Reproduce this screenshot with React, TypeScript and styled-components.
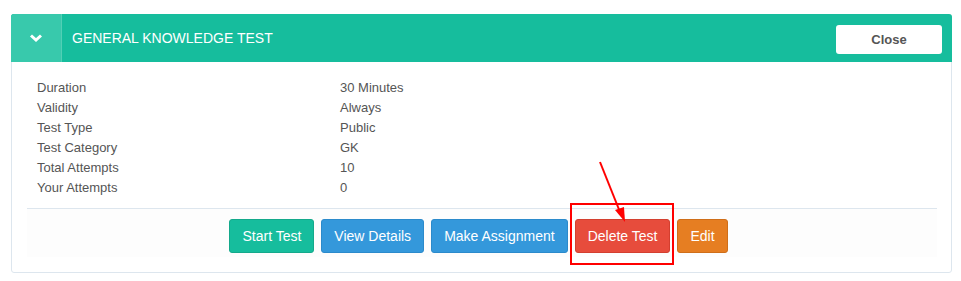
import React from 'react';
import styled, { createGlobalStyle } from 'styled-components';

const GlobalStyle = createGlobalStyle`
  body {
    margin: 0;
    background: #ffffff;
    font-family: "Liberation Sans", Arial, sans-serif;
  }
`;

const Page = styled.div`
  position: relative;
  padding: 14px 9px 0 11px;
`;

const Panel = styled.div`
  border: 1px solid #dde6ee;
  border-radius: 3px;
  background: #ffffff;
  padding-bottom: 15px;
`;

const Header = styled.div`
  display: flex;
  align-items: center;
  height: 48px;
  margin: -1px -1px 0 -1px;
  background: #16bd9d;
  border-radius: 3px 3px 0 0;
`;

const Toggle = styled.div`
  width: 50px;
  height: 48px;
  display: flex;
  align-items: center;
  justify-content: center;
  background: #38c9ac;
  border-right: 1px solid #52cfb5;
  border-top-left-radius: 3px;
`;

const Title = styled.div`
  flex: 1;
  padding-left: 10px;
  color: #ffffff;
  font-size: 14px;
  text-transform: uppercase;
`;

const CloseButton = styled.button`
  width: 106px;
  height: 29px;
  margin: 2px 10px 0 0;
  border: none;
  border-radius: 3px;
  background: #ffffff;
  color: #555555;
  font-family: inherit;
  font-size: 13px;
  font-weight: bold;
  cursor: pointer;
`;

const Body = styled.div`
  padding: 16px 14px 0 15px;
`;

const InfoGrid = styled.div`
  display: grid;
  grid-template-columns: 303px 1fr;
  padding: 0 10px 10px 10px;
  border-bottom: 1px solid #dde6ee;
  color: #555555;
  font-size: 13px;
  line-height: 20px;
`;

const Footer = styled.div`
  display: flex;
  justify-content: center;
  padding: 10px 14px 4px 0;
  background: #fdfdfd;
`;

const ActionButton = styled.button<{ $bg: string; $border: string }>`
  height: 34px;
  padding: 0 12px;
  margin-left: 7px;
  border: 1px solid ${p => p.$border};
  border-radius: 3px;
  background: ${p => p.$bg};
  color: #ffffff;
  font-family: inherit;
  font-size: 14px;
  cursor: pointer;
`;

const Annotation = styled.svg`
  position: absolute;
  left: 0;
  top: 0;
  pointer-events: none;
`;

const rows: [string, string][] = [
  ['Duration', '30 Minutes'],
  ['Validity', 'Always'],
  ['Test Type', 'Public'],
  ['Test Category', 'GK'],
  ['Total Attempts', '10'],
  ['Your Attempts', '0'],
];

const actions = [
  { label: 'Start Test', bg: '#16bd9d', border: '#14a98b' },
  { label: 'View Details', bg: '#3498db', border: '#2b8acb' },
  { label: 'Make Assignment', bg: '#3498db', border: '#2b8acb' },
  { label: 'Delete Test', bg: '#e74c3c', border: '#d33f2f' },
  { label: 'Edit', bg: '#e67e22', border: '#cf6e19' },
];

const App: React.FC = () => {
  return (
    <Page>
      <GlobalStyle />
      <Panel>
        <Header>
          <Toggle>
            <svg width="14" height="10" viewBox="0 0 14 10">
              <path d="M2 2.5 L7 7 L12 2.5" stroke="#fff" strokeWidth="3" fill="none" />
            </svg>
          </Toggle>
          <Title>General Knowledge Test</Title>
          <CloseButton>Close</CloseButton>
        </Header>
        <Body>
          <InfoGrid>
            {rows.map(([label, value]) => (
              <React.Fragment key={label}>
                <div>{label}</div>
                <div>{value}</div>
              </React.Fragment>
            ))}
          </InfoGrid>
          <Footer>
            {actions.map(a => (
              <ActionButton key={a.label} $bg={a.bg} $border={a.border}>
                {a.label}
              </ActionButton>
            ))}
          </Footer>
        </Body>
      </Panel>
      <Annotation width="961" height="281">
        <rect x="571" y="204" width="102" height="60" fill="none" stroke="#ff0000" strokeWidth="2" />
        <line x1="600" y1="162" x2="620" y2="212" stroke="#ff0000" strokeWidth="2" />
        <polygon points="625,222 615,210 624,207" fill="#ff0000" />
      </Annotation>
    </Page>
  );
};

export default App;
